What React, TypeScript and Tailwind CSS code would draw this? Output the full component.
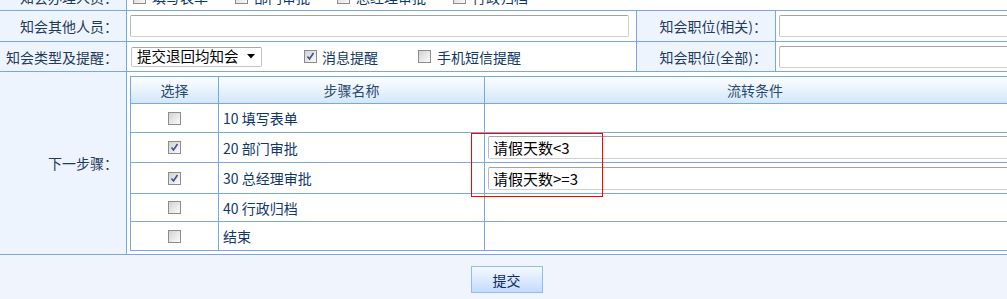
import React from "react";

const FONT = "font-['Noto_Sans_CJK_SC','Noto_Sans',sans-serif]";

function Cb({ checked = false }: { checked?: boolean }) {
  return (
    <span className="inline-flex h-[13px] w-[13px] shrink-0 items-center justify-center border border-[#8c8c8c] bg-linear-to-br from-[#d2d2d2] to-[#fbfbfb]">
      {checked && (
        <svg width="11" height="11" viewBox="0 0 11 11">
          <path d="M2.5 5.5 L4.5 8 L8.5 2" fill="none" stroke="#3f5189" strokeWidth="1.6" />
        </svg>
      )}
    </span>
  );
}

function TextInput({ className = "", value = "" }: { className?: string; value?: string }) {
  return (
    <div
      className={
        "flex h-[22px] items-center rounded-[2px] border border-[#cfcfcf] border-t-[#a3a3a3] border-l-[#b9b9b9] bg-white pl-[4px] text-[15px] leading-none text-black " +
        className
      }
    >
      {value}
    </div>
  );
}

const labelCls =
  "flex shrink-0 items-center justify-end border-r border-[#78a8dc] bg-[#eef4fd] pr-[8px] text-[14px] leading-none text-[#1e3b5a]";

export default function App() {
  const steps = [
    { name: "10 填写表单", checked: false, cond: "", h: "h-[29px]" },
    { name: "20 部门审批", checked: true, cond: "请假天数<3", h: "h-[30px]" },
    { name: "30 总经理审批", checked: true, cond: "请假天数>=3", h: "h-[31px]" },
    { name: "40 行政归档", checked: false, cond: "", h: "h-[28px]" },
    { name: "结束", checked: false, cond: "", h: "h-[29px]" },
  ];
  return (
    <div className={"h-[299px] w-[1007px] overflow-hidden bg-[#f0f5fd] " + FONT}>
      <div className="w-[1120px] -mt-[16px] bg-white">
        {/* Row 1 */}
        <div className="flex h-[27px] border-b border-[#78a8dc]">
          <div className={labelCls + " w-[127px]"}>知会办理人员：</div>
          <div className="flex flex-1 items-center gap-[27px] pl-[6px] text-[14px] leading-none text-[#0f3866]">
            {["填写表单", "部门审批", "总经理审批", "行政归档"].map((t) => (
              <span key={t} className="flex items-center gap-[6px]">
                <Cb />
                {t}
              </span>
            ))}
          </div>
        </div>
        {/* Row 2 */}
        <div className="flex h-[31px] border-b border-[#78a8dc]">
          <div className={labelCls + " w-[127px]"}>知会其他人员：</div>
          <div className="flex w-[510px] shrink-0 items-center border-r border-[#78a8dc] pl-[3px]">
            <TextInput className="w-[499px]" />
          </div>
          <div className={labelCls + " w-[139px] pr-[7px]"}>知会职位(相关)：</div>
          <div className="flex flex-1 items-center pl-[3px]">
            <TextInput className="w-[400px]" />
          </div>
        </div>
        {/* Row 3 */}
        <div className="flex h-[30px] border-b border-[#78a8dc]">
          <div className={labelCls + " w-[127px]"}>知会类型及提醒：</div>
          <div className="flex w-[510px] shrink-0 items-center border-r border-[#78a8dc] pl-[4px] text-[14px] leading-none text-[#0f3866]">
            <div className="flex h-[20px] w-[131px] items-center justify-between rounded-[2px] border border-[#c4c4c4] border-t-[#a8a8a8] bg-white pl-[5px] pr-[6px] text-[14.5px] text-black">
              <span>提交退回均知会</span>
              <svg width="8" height="5" viewBox="0 0 8 5">
                <path d="M0 0 H8 L4 4.5 Z" fill="#000" />
              </svg>
            </div>
            <span className="ml-[42px] flex items-center gap-[5px]">
              <Cb checked />
              消息提醒
            </span>
            <span className="ml-[40px] flex items-center gap-[6px]">
              <Cb />
              手机短信提醒
            </span>
          </div>
          <div className={labelCls + " w-[139px] pr-[7px]"}>知会职位(全部)：</div>
          <div className="flex flex-1 items-center pl-[3px]">
            <TextInput className="w-[400px]" />
          </div>
        </div>
        {/* Row 4 */}
        <div className="flex h-[183px] border-b border-[#78a8dc]">
          <div className={labelCls + " w-[127px]"}>下一步骤：</div>
          <div className="flex-1 pl-[3px] pt-[4px]">
            <div className="relative">
              <div className="flex h-[28px] border-y border-[#78a8dc] bg-linear-to-b from-[#fdfeff] to-[#d3e7fb] text-[14px] leading-none text-[#2a4a6c]">
                <div className="flex w-[89px] shrink-0 items-center justify-center border-x border-[#78a8dc]">选择</div>
                <div className="flex w-[266px] shrink-0 items-center justify-center border-r border-[#78a8dc]">步骤名称</div>
                <div className="flex w-[540px] shrink-0 items-center justify-center">流转条件</div>
              </div>
              {steps.map((s) => (
                <div key={s.name} className={"flex border-b border-[#78a8dc] bg-white text-[14px] leading-none text-[#0f3866] " + s.h}>
                  <div className="flex w-[89px] shrink-0 items-center justify-center border-x border-[#78a8dc]">
                    <Cb checked={s.checked} />
                  </div>
                  <div className="flex w-[266px] shrink-0 items-center border-r border-[#78a8dc] pl-[4px]">{s.name}</div>
                  <div className="flex flex-1 items-center pl-[3px]">
                    {s.cond && <TextInput className="h-[23px] w-[600px]" value={s.cond} />}
                  </div>
                </div>
              ))}
              <div className="absolute left-[341px] top-[57px] h-[64px] w-[132px] border border-[#ff0000]" />
            </div>
          </div>
        </div>
      </div>
      {/* Footer */}
      <div className="flex justify-center pl-[6px] pt-[11px]">
        <button className="flex h-[27px] w-[72px] items-center justify-center border border-[#93bcf3] bg-linear-to-b from-[#f5f9ff] to-[#c4dbfb] text-[14px] leading-none text-[#0a2b66]">
          提交
        </button>
      </div>
    </div>
  );
}
